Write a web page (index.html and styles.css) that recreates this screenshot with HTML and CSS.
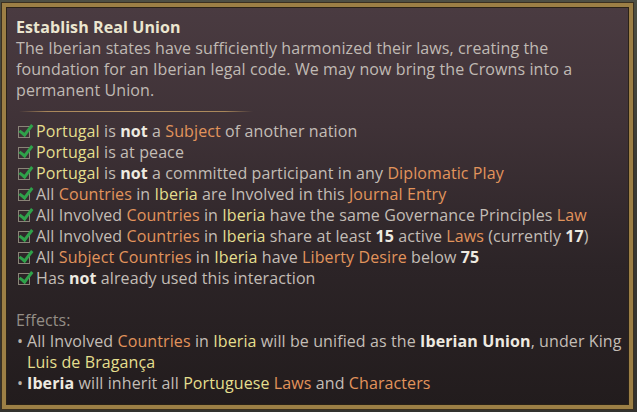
FILE: index.html
```html
<!DOCTYPE html>
<html>
<head>
<meta charset="utf-8">
<link rel="stylesheet" href="styles.css">
</head>
<body>
<div class="panel">
  <div class="title">Establish Real Union</div>
  <p class="desc">The Iberian states have sufficiently harmonized their laws, creating the foundation for an Iberian legal code. We may now bring the Crowns into a permanent Union.</p>
  <div class="sep"></div>
  <ul class="conds">
    <li><span class="chk"></span><span class="y">Portugal</span> is <b>not</b> a <span class="o">Subject</span> of another nation</li>
    <li><span class="chk"></span><span class="y">Portugal</span> is at peace</li>
    <li><span class="chk"></span><span class="y">Portugal</span> is <b>not</b> a committed participant in any <span class="o">Diplomatic Play</span></li>
    <li><span class="chk"></span>All <span class="o">Countries</span> in <span class="y">Iberia</span> are Involved in this <span class="o">Journal Entry</span></li>
    <li><span class="chk"></span>All Involved <span class="o">Countries</span> in <span class="y">Iberia</span> have the same Governance Principles <span class="o">Law</span></li>
    <li><span class="chk"></span>All Involved <span class="o">Countries</span> in <span class="y">Iberia</span> share at least <b>15</b> active <span class="o">Laws</span> (currently <b>17</b>)</li>
    <li><span class="chk"></span>All <span class="o">Subject Countries</span> in <span class="y">Iberia</span> have <span class="o">Liberty Desire</span> below <b>75</b></li>
    <li><span class="chk"></span>Has <b>not</b> already used this interaction</li>
  </ul>
  <div class="effects">Effects:</div>
  <ul class="eff">
    <li>All Involved <span class="o">Countries</span> in <span class="y">Iberia</span> will be unified as the <b>Iberian Union</b>, under King <span class="y">Luis de Bragança</span></li>
    <li><b>Iberia</b> will inherit all <span class="y">Portuguese</span> <span class="o">Laws</span> and <span class="o">Characters</span></li>
  </ul>
</div>
</body>
</html>
```

FILE: styles.css
```css
html, body {
  margin: 0;
  padding: 0;
}
body {
  width: 637px;
  height: 412px;
  background: linear-gradient(180deg, #4d4f44 0%, #3a3a35 40%, #33322f 100%);
  font-family: "Open Sans", "Noto Sans", sans-serif;
  font-size: 16px;
  letter-spacing: 0.1px;
  color: #c3bdb6;
  overflow: hidden;
  padding-top: 3px;
  padding-left: 2px;
  box-sizing: border-box;
}
.panel {
  width: 631px;
  height: 406px;
  box-sizing: border-box;
  border: 4px solid #9c7f45;
  box-shadow: inset 0 0 0 1px #2a2218, 0 0 0 1px #3b3020;
  background: linear-gradient(180deg, #4a3b41 0%, #3f3237 30%, #2c2427 65%, #221c1d 100%);
  padding: 10px 2px 0 10px;
  line-height: 21px;
}
.title {
  font-weight: 700;
  color: #ebe6cf;
}
.desc {
  margin: 0;
  color: #c0bab4;
}
.sep {
  height: 1px;
  width: 234px;
  margin: 10px 0 9px 3px;
  background: linear-gradient(90deg, rgba(166,134,80,0) 0%, #a8865a 12%, #bb9866 50%, #a8865a 88%, rgba(166,134,80,0) 100%);
}
ul {
  list-style: none;
  margin: 0;
  padding: 0;
}
.conds li {
  white-space: nowrap;
}
.chk {
  display: inline-block;
  position: relative;
  vertical-align: -1px;
  width: 12px;
  height: 12px;
  border: 1px solid #8a8478;
  margin: 0 6px 0 2px;
  box-sizing: border-box;
}
.chk::after {
  content: "";
  position: absolute;
  left: 3px;
  top: -5px;
  width: 5px;
  height: 11px;
  border-right: 3px solid #2fa24a;
  border-bottom: 3px solid #2fa24a;
  transform: rotate(38deg);
}
.y { color: #e5df8e; }
.o { color: #e2945c; }
b { color: #eeeae0; font-weight: 700; }
.effects {
  margin-top: 21px;
  color: #948e86;
}
.eff li {
  position: relative;
  padding-left: 11px;
}
.eff li::before {
  content: "•";
  position: absolute;
  left: 1px;
  top: 0;
  color: #b8b2aa;
}
```
